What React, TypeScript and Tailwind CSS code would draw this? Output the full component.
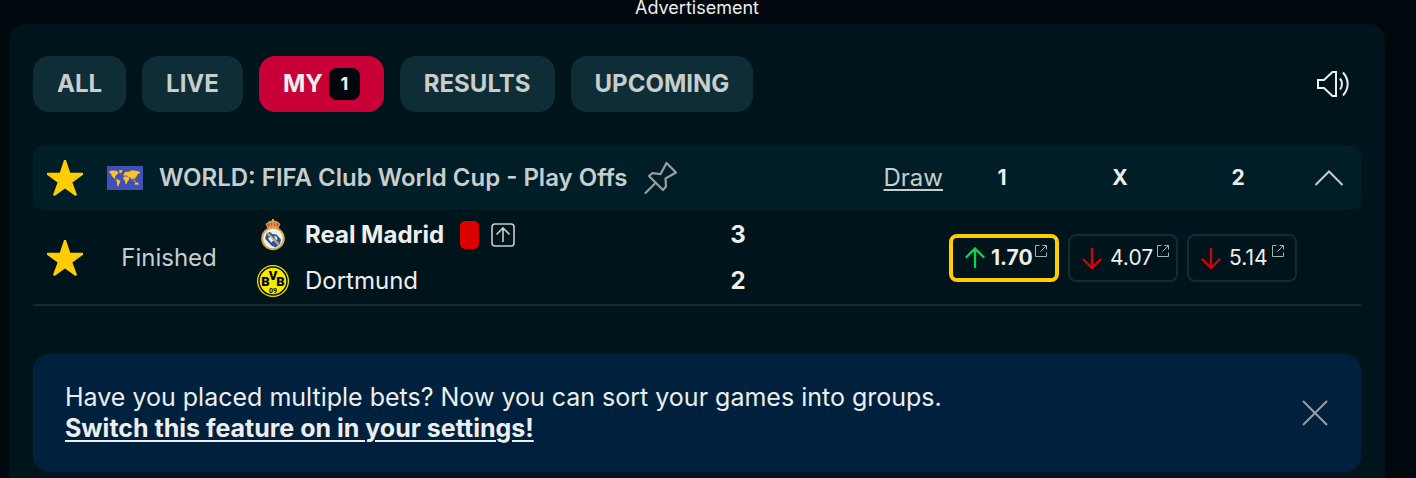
import { ReactNode, useState } from 'react';

type Tab = {
  label: string;
  count?: number;
};

type Odd = {
  value: string;
  rising: boolean;
  won: boolean;
};

const tabs: Tab[] = [
  { label: 'ALL' },
  { label: 'LIVE' },
  { label: 'MY', count: 1 },
  { label: 'RESULTS' },
  { label: 'UPCOMING' },
];

const odds: Odd[] = [
  { value: '1.70', rising: true, won: true },
  { value: '4.07', rising: false, won: false },
  { value: '5.14', rising: false, won: false },
];

const StarIcon = () => (
  <svg width="36" height="36" viewBox="0 0 36 36" fill="#ffcd00">
    <path d="M17 0h2l4.2 12.8H36v2L25.4 22.4 30 34.8 28.4 36 18 28.6 7.6 36 6 34.8l4.6-12.4L0 14.8v-2h12.8z" />
  </svg>
);

const SoundIcon = () => (
  <svg
    width="34"
    height="28"
    viewBox="0 0 34 28"
    fill="none"
    stroke="#eee"
    strokeWidth="2"
  >
    <path d="M2 10h6l8.500-8H20v24h-3.500L8 18H2z" />
    <path d="M24 8.500c2.600 3.200 2.600 7.800 0 11" />
    <path d="M27 2.500c6.200 7 6.200 16 0 23" />
  </svg>
);

const PinIcon = () => (
  <svg
    width="34"
    height="34"
    viewBox="0 0 34 34"
    fill="none"
    stroke="#999d9f"
    strokeWidth="2.200"
    strokeLinejoin="round"
    strokeLinecap="round"
  >
    <path d="M22.500 2 32 11.500 21.500 17.500 22 25.500 19 29 5 15l3.500-2.800 8 1z" />
    <path d="M11.500 22 1.500 32" />
  </svg>
);

const WorldFlag = () => (
  <svg width="36" height="24" viewBox="0 0 36 24" fill="#ffc423">
    <path fill="#4050b5" d="M0 0h36v24H0z" />
    <path d="M2.500 5 6 4.500 10 5l1.500 2L10 8.500 8.500 10 8 11.500 9 13.200 6.500 12 4.500 9.500 4 7.500 2.500 7z" />
    <path d="M12 4.200 15.500 4 14.500 6.500 12.800 7.500z" />
    <path d="M9 13.200 11 13.400 13.500 15 12.500 17.500 11 20.500 10 19.500 10 16.500z" />
    <path d="M16.500 11 18.500 10.200 21.500 11 22.500 13 20.500 15.500 19.500 18.200 18.300 17.500 18 14.500 16.200 13.200z" />
    <path d="M16.500 9.800 17 7.500 19 5.500 21 6 25 4.200 30 5 33 6 32.500 7.500 30.500 8 30 10 28.500 11.500 28 13.500 26.500 12 25 14 23.500 11.500 21.500 11 20 9.500z" />
    <path d="M26.500 14.300 29 15.200 28.500 16 26.500 15.200zM28 16.800 31 16.500 31.800 18.500 30 18.800 27.500 18.600z" />
  </svg>
);

const RealMadridLogo = () => (
  <svg width="32" height="32" viewBox="0 0 32 32">
    <path fill="#d5a548" d="M8.500 5 12 2.200 15 1.500V0h2v1.500l3 .700L23.500 5 21 10H11z" />
    <path fill="#d8504c" d="M9.800 5.200 12 3.500l1 2-1 2.500h-1zM14 3.200h1.200v4H13.800zM16.800 3.200H18l.2 4h-1.400zM20 3.500l2.200 1.700L21 8h-1l-1-2.500z" />
    <circle cx="16" cy="19.500" r="11.800" fill="#d5a548" />
    <circle cx="16" cy="19.500" r="9.800" fill="#f1f1ec" />
    <path fill="#1f58a5" d="M8 19.500 9.500 14.500 13 13l2.500 2 4 .500 4.500 5-1 4.500-4.500 3.500-3.500-1.500L12 24z" />
    <path fill="#d5a548" d="m9 14.500 1.500-1.500 12 11.500-1.500 1.800z" />
    <path fill="#f1f1ec" d="m11 19 2.500-1 3 3.500-2.500 2zM17 17l2.500.500 1 3-1.500.500z" />
  </svg>
);

const DortmundLogo = () => (
  <svg
    width="32"
    height="32"
    viewBox="0 0 32 32"
    fontFamily="Roboto, sans-serif"
    fontWeight="900"
    textAnchor="middle"
  >
    <circle cx="16" cy="16" r="16" fill="#f5ea00" />
    <circle cx="16" cy="16" r="14" fill="#f5ea00" stroke="#111" strokeWidth="1.500" />
    <text x="8.500" y="21" fontSize="13">B</text>
    <text x="16" y="15" fontSize="13">V</text>
    <text x="23.500" y="21" fontSize="13">B</text>
    <text x="16" y="28" fontSize="7" fontWeight="700">09</text>
  </svg>
);

const AdvancedIcon = () => (
  <svg
    width="26"
    height="26"
    viewBox="0 0 26 26"
    fill="none"
    stroke="#c8cdcd"
    strokeWidth="1.600"
  >
    <rect x="2" y="2" width="22" height="22" rx="3" />
    <path d="M13 20V6M6.500 12.500 13 6l6.500 6.500" />
  </svg>
);

const OddArrow = ({ rising }: { rising: boolean }) => (
  <svg
    width="20"
    height="22"
    viewBox="0 0 20 22"
    fill="none"
    strokeWidth="2.300"
    strokeLinecap="round"
    stroke={rising ? '#0ad54b' : '#dc0000'}
  >
    {rising ? (
      <path d="M10 20V1.500M1.500 10 10 1.500l8.500 8.500" />
    ) : (
      <path d="M10 2v19M1.500 12.500 10 21l8.500-8.500" />
    )}
  </svg>
);

const ExternalIcon = () => (
  <svg
    width="12"
    height="12"
    viewBox="0 0 12 12"
    fill="none"
    stroke="#a9b1b3"
    className="mb-3.5"
  >
    <path d="M4.500.5h-4v11h11v-4M7.500.5h4v4M11.500.5l-6 6" />
  </svg>
);

const TeamRow = ({
  logo,
  name,
  bold,
  score,
  children,
}: {
  logo: ReactNode;
  name: string;
  bold?: boolean;
  score: number;
  children?: ReactNode;
}) => (
  <div className="flex h-[46px] items-center text-[#eee]">
    <span className="mr-4 shrink-0">{logo}</span>
    <span className={bold ? 'font-bold' : ''}>{name}</span>
    {children}
    <span className="ml-auto w-8 text-center font-bold">{score}</span>
  </div>
);

const App = () => {
  const [activeTab, setActiveTab] = useState('MY');
  const [expanded, setExpanded] = useState(true);
  const [showBanner, setShowBanner] = useState(true);

  return (
    <div className="flex min-h-screen flex-col bg-[#00070d] pr-[31px] pl-[9px] font-['Inter',sans-serif] text-2xl leading-[30px] text-[#c8cdcd]">
      <p className="h-6 text-center text-lg leading-4 text-[#eee]">
        Advertisement
      </p>
      <main className="grow rounded-t-[16px] bg-[#00141b] px-6 pt-8">
        <div className="flex items-center justify-between">
          <nav className="flex gap-4">
            {tabs.map((tab) => (
              <button
                key={tab.label}
                onClick={() => setActiveTab(tab.label)}
                className={`flex h-14 items-center gap-1.5 rounded-[16px] px-6 font-bold ${
                  tab.label === activeTab
                    ? 'bg-[#c80037] text-[#eee]'
                    : 'bg-[#0f2d37]'
                }`}
              >
                {tab.label}
                {tab.count && (
                  <span className="w-[31px] rounded-lg bg-[#00070d] text-center text-lg leading-8">
                    {tab.count}
                  </span>
                )}
              </button>
            ))}
          </nav>
          <button aria-label="Sound" className="mr-[11px]">
            <SoundIcon />
          </button>
        </div>

        <section className="mt-[34px]">
          <header className="flex h-16 items-center rounded-lg bg-[#001e28]">
            <button aria-label="Favourite league" className="flex w-16 justify-center">
              <StarIcon />
            </button>
            <span className="mr-4 ml-[10px]">
              <WorldFlag />
            </span>
            <h2 className="font-semibold whitespace-nowrap">
              WORLD: FIFA Club World Cup - Play Offs
            </h2>
            <button aria-label="Pin league" className="ml-4">
              <PinIcon />
            </button>
            <a
              href="#draw"
              className="mr-1 ml-auto underline decoration-2 underline-offset-3"
            >
              Draw
            </a>
            <div className="grid grid-cols-[repeat(3,110px)] gap-2 text-center text-[21px] font-bold text-[#eee]">
              <span>1</span>
              <span>X</span>
              <span>2</span>
            </div>
            <button
              aria-label="Toggle league"
              onClick={() => setExpanded(!expanded)}
              className="ml-1 flex w-16 justify-center"
            >
              <svg width="30" height="18" viewBox="0 0 30 18" fill="none" stroke="#c8cdcd" strokeWidth="2">
                <path d={expanded ? 'M1.500 16 15 2.500 28.500 16' : 'M1.500 2 15 15.500 28.500 2'} />
              </svg>
            </button>
          </header>

          {expanded && (
            <div className="flex items-center border-b-2 border-[#0f2d37] pt-0.5">
              <button aria-label="Favourite match" className="flex w-16 justify-center">
                <StarIcon />
              </button>
              <span className="w-36 text-center">Finished</span>
              <div className="ml-4 flex-1">
                <TeamRow logo={<RealMadridLogo />} name="Real Madrid" bold score={3}>
                  <span className="ml-4 h-7 w-[19px] rounded-[5px] bg-[#dc0000]" />
                  <span className="ml-[11px]">
                    <AdvancedIcon />
                  </span>
                </TeamRow>
                <TeamRow logo={<DortmundLogo />} name="Dortmund" score={2} />
              </div>
              <div className="ml-[195px] grid grid-cols-[repeat(3,110px)] gap-[9px]">
                {odds.map((odd) => (
                  <button
                    key={odd.value}
                    className={`flex h-12 items-center rounded-lg pl-3 text-[21px] text-[#eee] ${
                      odd.won
                        ? 'gap-0.5 border-4 border-[#ffcd00] font-bold'
                        : 'gap-1 border-2 border-[#0f2d37]'
                    }`}
                  >
                    <OddArrow rising={odd.rising} />
                    <span className="ml-1">{odd.value}</span>
                    <ExternalIcon />
                  </button>
                ))}
              </div>
              <span className="w-16" />
            </div>
          )}
        </section>

        {showBanner && (
          <aside className="mt-12 mb-1.5 flex items-center justify-between rounded-[16px] bg-[#00213d] px-8 py-7 text-[25px] leading-[31px] text-[#eee]">
            <div>
              <p>
                Have you placed multiple bets? Now you can sort your games into
                groups.
              </p>
              <a
                href="#settings"
                className="font-bold underline decoration-2 underline-offset-3"
              >
                Switch this feature on in your settings!
              </a>
            </div>
            <button aria-label="Close" onClick={() => setShowBanner(false)}>
              <svg width="28" height="28" viewBox="0 0 28 28" fill="none" stroke="#999fa4" strokeWidth="2">
                <path d="m2 2 24 24M26 2 2 26" />
              </svg>
            </button>
          </aside>
        )}
      </main>
    </div>
  );
};

export default App;
